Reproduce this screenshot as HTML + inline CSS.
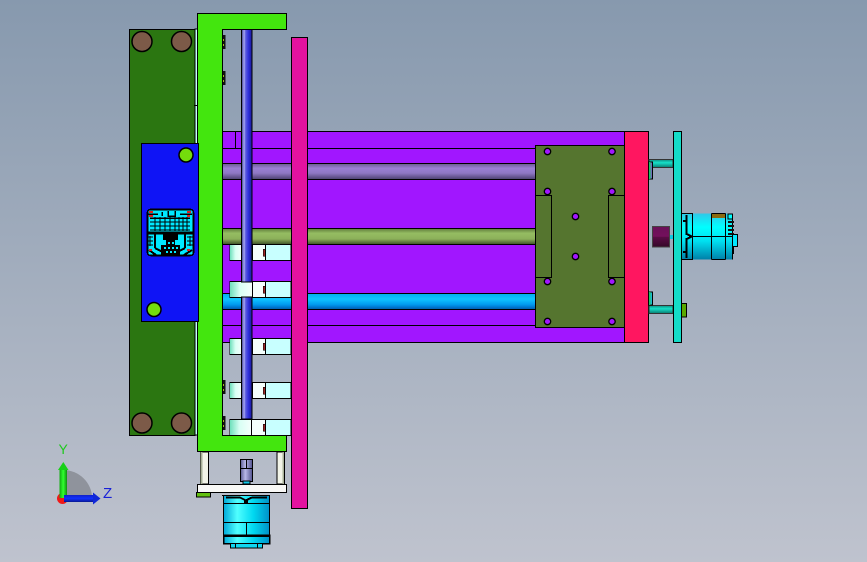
<!DOCTYPE html>
<html><head><meta charset="utf-8"><title>CAD assembly</title>
<style>html,body{margin:0;padding:0;background:#a5adbc}svg{display:block}</style></head>
<body>
<svg xmlns="http://www.w3.org/2000/svg" width="867" height="562" viewBox="0 0 867 562" shape-rendering="crispEdges">
<defs>
<linearGradient id="bg" x1="0" y1="0" x2="0" y2="1"><stop offset="0" stop-color="#8799ae"/><stop offset="1" stop-color="#bfc3ce"/></linearGradient>
<linearGradient id="tp" x1="0" y1="0" x2="0" y2="1"><stop offset="0" stop-color="#6a5a90"/><stop offset=".3" stop-color="#9a80d4"/><stop offset=".6" stop-color="#8f78c4"/><stop offset="1" stop-color="#4b4070"/></linearGradient>
<linearGradient id="to" x1="0" y1="0" x2="0" y2="1"><stop offset="0" stop-color="#5f7a3a"/><stop offset=".3" stop-color="#95bd62"/><stop offset=".65" stop-color="#8cb05a"/><stop offset="1" stop-color="#3d5028"/></linearGradient>
<linearGradient id="tc" x1="0" y1="0" x2="0" y2="1"><stop offset="0" stop-color="#00aef0"/><stop offset=".35" stop-color="#10c4ff"/><stop offset=".7" stop-color="#0098ee"/><stop offset="1" stop-color="#0058b0"/></linearGradient>
<linearGradient id="rod" x1="0" y1="0" x2="1" y2="0"><stop offset="0" stop-color="#34348c"/><stop offset=".25" stop-color="#a8a8f0"/><stop offset=".4" stop-color="#5a5ae0"/><stop offset=".7" stop-color="#2a2ad8"/><stop offset="1" stop-color="#1c1c90"/></linearGradient>
<linearGradient id="wb" x1="0" y1="0" x2="1" y2="0"><stop offset="0" stop-color="#6fe0bc"/><stop offset=".45" stop-color="#d8fff4"/><stop offset="1" stop-color="#f4fffc"/></linearGradient>
<linearGradient id="mv" x1="0" y1="0" x2="0" y2="1"><stop offset="0" stop-color="#30c8e8"/><stop offset=".3" stop-color="#00ffff"/><stop offset=".6" stop-color="#00e0f0"/><stop offset="1" stop-color="#0080a8"/></linearGradient>
<linearGradient id="mh" x1="0" y1="0" x2="1" y2="0"><stop offset="0" stop-color="#00a8d8"/><stop offset=".3" stop-color="#50ffff"/><stop offset=".65" stop-color="#00d8f0"/><stop offset="1" stop-color="#0090c8"/></linearGradient>
<linearGradient id="teal" x1="0" y1="0" x2="0" y2="1"><stop offset="0" stop-color="#0e8c80"/><stop offset=".4" stop-color="#16e0c8"/><stop offset="1" stop-color="#0a7a70"/></linearGradient>
<linearGradient id="cp" x1="0" y1="0" x2="1" y2="0"><stop offset="0" stop-color="#5a5a90"/><stop offset=".4" stop-color="#b8b8e8"/><stop offset="1" stop-color="#50508c"/></linearGradient>
<linearGradient id="dp" x1="0" y1="0" x2="0" y2="1"><stop offset="0" stop-color="#6a1058"/><stop offset=".48" stop-color="#74105c"/><stop offset=".52" stop-color="#5a0c46"/><stop offset="1" stop-color="#340828"/></linearGradient>
<linearGradient id="ga" x1="0" y1="0" x2="1" y2="0"><stop offset="0" stop-color="#10a810"/><stop offset=".5" stop-color="#30ff30"/><stop offset="1" stop-color="#109010"/></linearGradient>
<linearGradient id="ba" x1="0" y1="0" x2="0" y2="1"><stop offset="0" stop-color="#1020c8"/><stop offset=".5" stop-color="#1030ff"/><stop offset="1" stop-color="#081890"/></linearGradient>
</defs>
<rect width="867" height="562" fill="url(#bg)"/>

<!-- triad -->
<g shape-rendering="auto">
<path d="M63 498V470A29 28 0 0 1 92 498Z" fill="#8f939c"/>
<circle cx="62.500" cy="498.500" r="5.500" fill="#f01818"/>
<rect x="59.500" y="469" width="7.500" height="29" fill="url(#ga)"/>
<path d="M58 470L63.300 462L68.500 470Z" fill="#18d018"/>
<rect x="64" y="495" width="30" height="7" fill="url(#ba)"/>
<path d="M93 492.500L100.500 498.500L93 504.500Z" fill="#1028d8"/>
<text x="58.500" y="454" font-family="'Liberation Sans',sans-serif" font-size="14" fill="#20c820">Y</text>
<text x="103" y="498" font-family="'Liberation Sans',sans-serif" font-size="15" fill="#1820d8">Z</text>
</g>

<!-- main purple body -->
<rect x="222.500" y="131.500" width="403" height="211" fill="#a116ff" stroke="#000"/>
<path d="M222 148.500H535M235.500 131V148M222 325.500H535M222 309.500H535M222 163.500H535" stroke="#000" fill="none"/>
<rect x="222.500" y="163.500" width="313" height="16" fill="url(#tp)" stroke="#000"/>
<rect x="222.500" y="228.500" width="313" height="16" fill="url(#to)" stroke="#000"/>
<rect x="222.500" y="293.500" width="313" height="16" fill="url(#tc)" stroke="#000"/>

<!-- white clamps -->
<g stroke="#000">
<rect x="230" y="244.500" width="61" height="16" fill="#c8ffff"/>
<rect x="230" y="281.500" width="61" height="16" fill="#c8ffff"/>
<rect x="230" y="338.500" width="61" height="16" fill="#c8ffff"/>
<rect x="230" y="382.500" width="61" height="16" fill="#c8ffff"/>
<rect x="230" y="419.500" width="61" height="16" fill="#c8ffff"/>
</g>
<g fill="url(#wb)">
<rect x="230" y="245" width="12" height="15"/><rect x="230" y="339" width="12" height="15"/><rect x="230" y="383" width="12" height="15"/>
</g>
<g fill="#f4fffc" stroke="#000">
<rect x="252.500" y="244.500" width="13" height="16"/><rect x="252.500" y="281.500" width="13" height="16"/><rect x="252.500" y="338.500" width="13" height="16"/><rect x="252.500" y="382.500" width="13" height="16"/><rect x="251.500" y="419.500" width="14" height="16"/>
</g>
<rect x="230" y="282" width="22" height="15" fill="url(#wb)"/>
<rect x="230" y="420" width="21" height="15" fill="url(#wb)"/>
<g fill="#a02828" stroke="#000" stroke-width=".5"><rect x="263" y="249" width="2" height="7"/><rect x="263" y="286" width="2" height="7"/><rect x="263" y="343" width="2" height="7"/><rect x="263" y="387" width="2" height="7"/><rect x="263" y="424" width="2" height="7"/></g>

<!-- rod -->
<rect x="241.500" y="29" width="10.500" height="253" fill="url(#rod)" stroke="#000"/>
<rect x="241.500" y="297" width="10.500" height="122" fill="url(#rod)" stroke="#000"/>

<!-- magenta plate -->
<rect x="291.500" y="37.500" width="16" height="471" fill="#e3129f" stroke="#000"/>

<!-- dark green plate -->
<rect x="129.500" y="29.500" width="65.500" height="406" fill="#2b7611" stroke="#000"/>
<rect x="195" y="29" width="2.500" height="406" fill="#c4ffff" stroke="#000" stroke-width=".6"/>
<path d="M194 105.500H198" stroke="#000"/>
<g shape-rendering="auto" fill="#7c5a48" stroke="#000" stroke-width="1.500">
<circle cx="142" cy="41.500" r="10"/><circle cx="181.500" cy="41.500" r="10"/><circle cx="142" cy="423" r="10"/><circle cx="181.500" cy="423" r="10"/>
</g>

<!-- bright green C -->
<path d="M197.500 13.500H286.500V29.500H222.500V435.500H286.500V451.500H197.500Z" fill="#43e60e" stroke="#000"/>
<g fill="#111"><rect x="223" y="35" width="2.500" height="14"/><rect x="223" y="71" width="2.500" height="14"/><rect x="223" y="380" width="2.500" height="14"/><rect x="223" y="416" width="2.500" height="14"/></g>
<g fill="#a8b820"><rect x="223" y="39" width="1" height="2"/><rect x="223" y="44" width="1" height="2"/><rect x="223" y="75" width="1" height="2"/><rect x="223" y="80" width="1" height="2"/><rect x="223" y="384" width="1" height="2"/><rect x="223" y="389" width="1" height="2"/><rect x="223" y="420" width="1" height="2"/><rect x="223" y="425" width="1" height="2"/></g>

<!-- blue plate -->
<rect x="141.500" y="143.500" width="57" height="178" fill="#0f14f5" stroke="#000"/>
<g shape-rendering="auto" fill="#74dc0c" stroke="#000" stroke-width="1.500">
<circle cx="186" cy="155" r="7"/><circle cx="154" cy="309.500" r="7"/>
</g>

<!-- logo -->
<rect x="147" y="209" width="46.500" height="47" rx="3" fill="#00e8ff"/>
<g stroke="#000" fill="none">
<rect x="147.500" y="209.500" width="46" height="46" rx="3" stroke-width="1.600"/>
<path d="M148 214H158M162 212V216M168 211V216H175V211M180 214H192M150 218H190" stroke-width="1.500"/>
<path d="M150 222H190M150 226H190M150 230H190M155 217V231M160 217V231M165 217V231M170 217V231M175 217V231M179 217V231M183 217V231M187 217V231" stroke-width="1.300"/>
<path d="M148 233H193" stroke-width="3"/>
<path d="M148 237H153M148 241H153M148 245H153M150 236V246M187 237H193M187 241H193M187 245H193M190 236V246" stroke-width="1.300"/>
<path d="M155 234V248M185 234V248M155 248L168 255M185 248L172 255M149 250L156 255M192 250L184 255" stroke-width="2"/>
</g>
<path d="M163 234H178V240H175V245H180V255H161V245H166V240H163Z" fill="#000"/>
<path d="M157 236H163V245H157ZM179 236H184V245H179Z" fill="#00e8ff"/>
<g fill="#00e8ff"><rect x="164" y="247" width="2" height="2"/><rect x="168" y="247" width="2" height="2"/><rect x="172" y="247" width="2" height="2"/><rect x="176" y="247" width="2" height="2"/><rect x="166" y="251" width="2" height="2"/><rect x="170" y="251" width="2" height="2"/><rect x="174" y="251" width="2" height="2"/><rect x="168" y="242" width="2" height="2"/><rect x="172" y="242" width="2" height="2"/></g>
<g fill="#e02020"><rect x="149" y="211" width="4" height="2"/><rect x="149" y="215" width="4" height="2"/><rect x="187" y="211" width="4" height="2"/><rect x="187" y="215" width="3" height="2"/><rect x="149" y="249" width="3" height="2"/><rect x="187" y="249" width="3" height="2"/></g>

<!-- right plate -->
<rect x="535.500" y="145.500" width="89" height="182" fill="#55752f" stroke="#000"/>
<rect x="535.500" y="195.500" width="16" height="82" fill="#55752f" stroke="#000"/>
<rect x="608.500" y="195.500" width="16" height="82" fill="#55752f" stroke="#000"/>
<g shape-rendering="auto" fill="#a116ff" stroke="#000" stroke-width="1.300">
<circle cx="547.500" cy="151.500" r="3.200"/><circle cx="612" cy="151.500" r="3.200"/>
<circle cx="547.500" cy="191.500" r="3.200"/><circle cx="612" cy="191.500" r="3.200"/>
<circle cx="575.500" cy="216.500" r="3.200"/><circle cx="575.500" cy="256.500" r="3.200"/>
<circle cx="547.500" cy="281.500" r="3.200"/><circle cx="612" cy="281.500" r="3.200"/>
<circle cx="547.500" cy="321.500" r="3.200"/><circle cx="612" cy="321.500" r="3.200"/>
</g>
<rect x="624.500" y="131.500" width="24" height="211" fill="#ff1660" stroke="#000"/>

<!-- right rods & flange -->
<rect x="649" y="159.500" width="24" height="8" fill="url(#teal)" stroke="#333"/>
<rect x="649" y="305.500" width="24" height="8" fill="url(#teal)" stroke="#333"/>
<rect x="649" y="162" width="3.500" height="17" fill="#7070b8" stroke="#000"/>
<rect x="649" y="162" width="1.500" height="17" fill="#18c860"/>
<rect x="649" y="292" width="3.500" height="13" fill="#20b8d0" stroke="#000"/>
<rect x="649" y="292" width="1.500" height="13" fill="#18c860"/>
<rect x="652.500" y="226.500" width="17" height="20.500" fill="url(#dp)" stroke="#444"/>
<rect x="670" y="235" width="3" height="4" fill="#10c8e0"/>
<rect x="673.500" y="131.500" width="8" height="211" fill="#14dcc8" stroke="#000"/>
<rect x="681.500" y="303.500" width="5" height="13.500" fill="#5aa800" stroke="#000"/>

<!-- right motor -->
<rect x="682" y="213.500" width="44" height="46" fill="url(#mv)"/>
<rect x="726" y="213.500" width="6.500" height="46" fill="url(#mv)"/>
<g stroke="#000" fill="none">
<path d="M682 213.500H692.500V259.500H682M692.500 236.500H711M711.500 213.500V259.500M725.500 213.500V259.500M711.500 259.500H725.500M711.500 213.500H725.500M711.500 236.500H726M732.500 213.500V259.500M726 236.500H733" stroke-width="1.200"/>
<path d="M686.500 215V234L692 236.500M686.500 258V239L692 236.500M683 221H687M683 252H687" stroke-width="2"/>
</g>
<rect x="712" y="214" width="13" height="4" fill="#8a6a10"/>
<rect x="728" y="214" width="4.500" height="5" fill="#00ffff" stroke="#000" stroke-width=".8"/>
<g fill="#111"><rect x="728" y="221" width="6" height="2"/><rect x="728" y="225" width="6" height="2"/><rect x="728" y="229" width="6" height="2"/><rect x="728" y="233" width="6" height="2"/></g>
<rect x="732.500" y="234.500" width="5" height="12" fill="#00e8ff" stroke="#000"/>
<path d="M733 246V254" stroke="#000" stroke-width="1.500"/>

<!-- bottom assembly -->
<rect x="200.500" y="452" width="8" height="32" fill="#f2f4e8" stroke="#000"/>
<rect x="200.500" y="452" width="2" height="32" fill="#a8b098"/>
<rect x="277" y="452" width="7.500" height="32" fill="#f2f4e8" stroke="#000"/>
<rect x="282.500" y="452" width="1.500" height="32" fill="#a8b098"/>
<rect x="240.500" y="459.500" width="12" height="22" fill="url(#cp)" stroke="#000"/>
<path d="M240 468.500H253M246.500 460V468" stroke="#000"/>
<rect x="243" y="481" width="7" height="3" fill="#10c8e8" stroke="#000" stroke-width=".6"/>
<rect x="197.500" y="484.500" width="89" height="8" fill="#f8f8f6" stroke="#000"/>
<rect x="196.500" y="492.500" width="14" height="4.500" fill="#62c010" stroke="#000"/>
<rect x="223.500" y="495.500" width="46" height="48" fill="url(#mh)"/>
<g stroke="#000" fill="none">
<path d="M222 495.500H270M223.500 495.500V535M269.500 495.500V535M223.500 503.500H269.500M223 522.500H270M246.500 522.500V535" stroke-width="1.200"/>
<path d="M226 497.500H240L245 500V503M267 497.500H252L247 500V503" stroke-width="2"/>
</g>
<rect x="223.500" y="535" width="46" height="8.500" fill="url(#mh)" stroke="#000" stroke-width="1.500"/>
<path d="M223 536H270" stroke="#000" stroke-width="2"/>
<rect x="230.500" y="543.500" width="32" height="4.500" fill="#10d8f0" stroke="#000"/>
<path d="M235.500 544V548M257.500 544V548" stroke="#000"/>
</svg>
</body></html>
